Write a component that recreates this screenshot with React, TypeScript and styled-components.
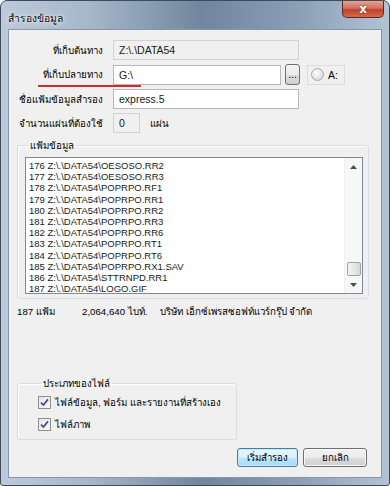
import styled, { createGlobalStyle } from 'styled-components';

const GlobalStyle = createGlobalStyle`
  html, body { margin: 0; padding: 0; background: #ffffff; }
  body {
    font-family: "Liberation Sans", "Noto Sans", sans-serif;
    font-size: 9.7px;
    color: #000;
  }
`;

const Window = styled.div`
  width: 390px;
  height: 486px;
  box-sizing: border-box;
  display: flex;
  flex-direction: column;
  padding: 0 7px 7px;
  border: 1px solid #3d4b5c;
  border-radius: 7px 7px 3px 3px;
  background: linear-gradient(90deg, #bccadb 0%, #a7b8cb 22%, #6f869e 52%, #8ca1b8 78%, #b3c3d4 100%);
`;

const TitleBar = styled.div`
  height: 28px;
  display: flex;
  align-items: flex-start;
  justify-content: space-between;
`;

const Title = styled.span`
  margin-top: 9px;
  font-size: 10.3px;
  color: #111;
  text-shadow: 0 0 6px rgba(255, 255, 255, 0.9), 0 0 3px rgba(255, 255, 255, 0.9);
`;

const CloseButton = styled.div`
  width: 42px;
  height: 17px;
  margin-right: -2px;
  box-sizing: border-box;
  border: 1px solid #5d2a24;
  border-top: none;
  border-radius: 0 0 5px 5px;
  background: linear-gradient(180deg, #e4a394 0%, #d2705d 45%, #c0402a 55%, #d6684c 100%);
  display: flex;
  align-items: center;
  justify-content: center;
  color: #fff;
  font-family: "DejaVu Sans", sans-serif;
  font-weight: bold;
  font-size: 12px;
  line-height: 1;
  text-shadow: 0 0 2px #5a1d12;
`;

const Client = styled.div`
  flex: 1;
  display: flex;
  flex-direction: column;
  background: #f0f0f0;
  border: 1px solid #8796a8;
`;

const FormGrid = styled.div`
  display: grid;
  grid-template-columns: 94px auto;
  column-gap: 10px;
  row-gap: 4px;
  margin-top: 10px;
  align-items: center;
`;

const Label = styled.div`
  position: relative;
  text-align: right;
  white-space: nowrap;
`;

const Annotation = styled.span`
  position: absolute;
  left: 29px;
  width: 103px;
  bottom: -5px;
  height: 2px;
  background: #c9302c;
`;

const FieldCell = styled.div`
  display: flex;
  align-items: center;
  gap: 4px;
`;

const TextBox = styled.div<{ $width: number; $disabled?: boolean }>`
  width: ${({ $width }) => $width}px;
  height: 20px;
  box-sizing: border-box;
  display: flex;
  align-items: center;
  padding-left: 5px;
  border: 1px solid ${({ $disabled }) => ($disabled ? '#d2d2d2' : '#b5b8bd')};
  background: ${({ $disabled }) => ($disabled ? '#f0f0f0' : '#ffffff')};
  font-size: 10.5px;
  color: #1a1a1a;
`;

const BrowseButton = styled.div`
  width: 15px;
  height: 21px;
  box-sizing: border-box;
  border: 1px solid #707070;
  border-radius: 3px;
  background: linear-gradient(180deg, #f2f2f2 0%, #ebebeb 50%, #dddddd 51%, #cfcfcf 100%);
  display: flex;
  align-items: flex-end;
  justify-content: center;
  padding-bottom: 4px;
  font-size: 10px;
  line-height: 1;
`;

const DriveBox = styled.div`
  margin-left: 3px;
  width: 38px;
  height: 20px;
  box-sizing: border-box;
  border: 1px solid #dcdcdc;
  display: flex;
  align-items: center;
  gap: 4px;
  padding-left: 3px;
  font-size: 10.5px;
`;

const Radio = styled.span`
  width: 11px;
  height: 11px;
  border-radius: 50%;
  border: 1px solid #a8a8a8;
  background: radial-gradient(circle at 40% 35%, #ffffff 0%, #e2e2e2 60%, #cfcfcf 100%);
`;

const Unit = styled.span`
  margin-left: 6px;
`;

const Group = styled.fieldset<{ $width: number }>`
  margin: 0 0 0 8px;
  width: ${({ $width }) => $width}px;
  box-sizing: border-box;
  border: 1px solid #d5dfe5;
  border-radius: 3px;
  box-shadow: inset 1px 1px 0 #ffffff;
  padding: 0;
  min-width: 0;
`;

const GroupTitle = styled.legend`
  margin-left: 3px;
  padding: 0 2px;
  line-height: 13px;
`;

const FilesGroup = styled(Group)`
  margin-top: 6px;
  padding: 5px 5px 4px 7px;
`;

const ListBox = styled.div`
  height: 137px;
  box-sizing: border-box;
  display: flex;
  border: 1px solid #828790;
  background: #ffffff;
`;

const ListRows = styled.div`
  flex: 1;
  padding: 2px 3px;
  overflow: hidden;
`;

const ListRow = styled.div`
  height: 11.2px;
  line-height: 11.2px;
  font-size: 9.5px;
  color: #1a1a1a;
  white-space: nowrap;
`;

const ScrollBar = styled.div`
  width: 17px;
  display: flex;
  flex-direction: column;
  background: #f7f7f7;
  border-left: 1px solid #f0f0f0;
`;

const ScrollArrow = styled.div`
  height: 17px;
  display: flex;
  align-items: center;
  justify-content: center;
`;

const ScrollTrack = styled.div`
  flex: 1;
  display: flex;
  flex-direction: column;
  justify-content: flex-end;
  align-items: center;
`;

const ScrollThumb = styled.div`
  width: 14px;
  height: 14px;
  box-sizing: border-box;
  border: 1px solid #a2a2a2;
  border-radius: 2px;
  background: linear-gradient(90deg, #f3f3f3 0%, #e8e8e8 50%, #d8d8d8 100%);
`;

const StatusRow = styled.div`
  display: grid;
  grid-template-columns: 65px 78px auto;
  margin: 6px 0 0 8px;
  line-height: 14px;
  white-space: nowrap;
`;

const TypesGroup = styled(Group)`
  margin-top: 58px;
  padding: 6px 0 8px 20px;
  display: flex;
  flex-direction: column;
  gap: 9px;
`;

const CheckRow = styled.label`
  display: flex;
  align-items: center;
  gap: 4px;
  height: 13px;
  white-space: nowrap;
`;

const CheckBox = styled.span`
  width: 13px;
  height: 13px;
  box-sizing: border-box;
  border: 1px solid #8f8f8f;
  background: linear-gradient(135deg, #e6e6e6 0%, #f8f8f8 100%);
  display: flex;
  align-items: center;
  justify-content: center;
`;

const ButtonRow = styled.div`
  display: flex;
  justify-content: flex-end;
  gap: 5px;
  margin: 8px 14px 0 0;
`;

const Button = styled.div<{ $default?: boolean }>`
  width: ${({ $default }) => ($default ? 61 : 64)}px;
  height: 19px;
  box-sizing: border-box;
  border: 1px solid ${({ $default }) => ($default ? '#3c7fb1' : '#707070')};
  border-radius: 3px;
  background: ${({ $default }) =>
    $default
      ? 'linear-gradient(180deg, #eaf6fd 0%, #d9f0fc 50%, #bee6fd 51%, #a7d9f5 100%)'
      : 'linear-gradient(180deg, #f2f2f2 0%, #ebebeb 50%, #dddddd 51%, #cfcfcf 100%)'};
  box-shadow: inset 0 0 0 1px ${({ $default }) => ($default ? '#c7e7f8' : '#f8f8f8')};
  display: flex;
  align-items: center;
  justify-content: center;
`;

const files = [
  '176 Z:\\.\\DATA54\\OESOSO.RR2',
  '177 Z:\\.\\DATA54\\OESOSO.RR3',
  '178 Z:\\.\\DATA54\\POPRPO.RF1',
  '179 Z:\\.\\DATA54\\POPRPO.RR1',
  '180 Z:\\.\\DATA54\\POPRPO.RR2',
  '181 Z:\\.\\DATA54\\POPRPO.RR3',
  '182 Z:\\.\\DATA54\\POPRPO.RR6',
  '183 Z:\\.\\DATA54\\POPRPO.RT1',
  '184 Z:\\.\\DATA54\\POPRPO.RT6',
  '185 Z:\\.\\DATA54\\POPRPO.RX1.SAV',
  '186 Z:\\.\\DATA54\\STTRNPD.RR1',
  '187 Z:\\.\\DATA54\\LOGO.GIF',
];

const Check = () => (
  <svg width="9" height="9" viewBox="0 0 9 9">
    <path d="M1 4.6 L3.4 7 L8 1.4" fill="none" stroke="#3d4f86" strokeWidth="1.7" />
  </svg>
);

const Arrow = ({ up }: { up?: boolean }) => (
  <svg width="7" height="4" viewBox="0 0 7 4">
    <path d={up ? 'M0 4 L3.5 0 L7 4 Z' : 'M0 0 L3.5 4 L7 0 Z'} fill="#4d4d4d" />
  </svg>
);

const App = () => (
  <>
    <GlobalStyle />
    <Window>
      <TitleBar>
        <Title>สำรองข้อมูล</Title>
        <CloseButton>x</CloseButton>
      </TitleBar>
      <Client>
        <FormGrid>
          <Label>ที่เก็บต้นทาง</Label>
          <TextBox $width={186} $disabled>Z:\.\DATA54</TextBox>

          <Label>
            ที่เก็บปลายทาง
            <Annotation />
          </Label>
          <FieldCell>
            <TextBox $width={168}>G:\</TextBox>
            <BrowseButton>...</BrowseButton>
            <DriveBox>
              <Radio />
              A:
            </DriveBox>
          </FieldCell>

          <Label>ชื่อแฟ้มข้อมูลสำรอง</Label>
          <TextBox $width={186}>express.5</TextBox>

          <Label>จำนวนแผ่นที่ต้องใช้</Label>
          <FieldCell>
            <TextBox $width={27} $disabled>0</TextBox>
            <Unit>แผ่น</Unit>
          </FieldCell>
        </FormGrid>

        <FilesGroup $width={352}>
          <GroupTitle>แฟ้มข้อมูล</GroupTitle>
          <ListBox>
            <ListRows>
              {files.map((f) => (
                <ListRow key={f}>{f}</ListRow>
              ))}
            </ListRows>
            <ScrollBar>
              <ScrollArrow>
                <Arrow up />
              </ScrollArrow>
              <ScrollTrack>
                <ScrollThumb />
              </ScrollTrack>
              <ScrollArrow>
                <Arrow />
              </ScrollArrow>
            </ScrollBar>
          </ListBox>
        </FilesGroup>

        <StatusRow>
          <span>187 แฟ้ม</span>
          <span>2,064,640 ไบท์.</span>
          <span>บริษัท เอ็กซ์เพรสซอฟท์แวร์กรุ๊ป จำกัด</span>
        </StatusRow>

        <TypesGroup $width={220}>
          <GroupTitle>ประเภทของไฟล์</GroupTitle>
          <CheckRow>
            <CheckBox>
              <Check />
            </CheckBox>
            ไฟล์ข้อมูล, ฟอร์ม และรายงานที่สร้างเอง
          </CheckRow>
          <CheckRow>
            <CheckBox>
              <Check />
            </CheckBox>
            ไฟล์ภาพ
          </CheckRow>
        </TypesGroup>

        <ButtonRow>
          <Button $default>เริ่มสำรอง</Button>
          <Button>ยกเลิก</Button>
        </ButtonRow>
      </Client>
    </Window>
  </>
);

export default App;
